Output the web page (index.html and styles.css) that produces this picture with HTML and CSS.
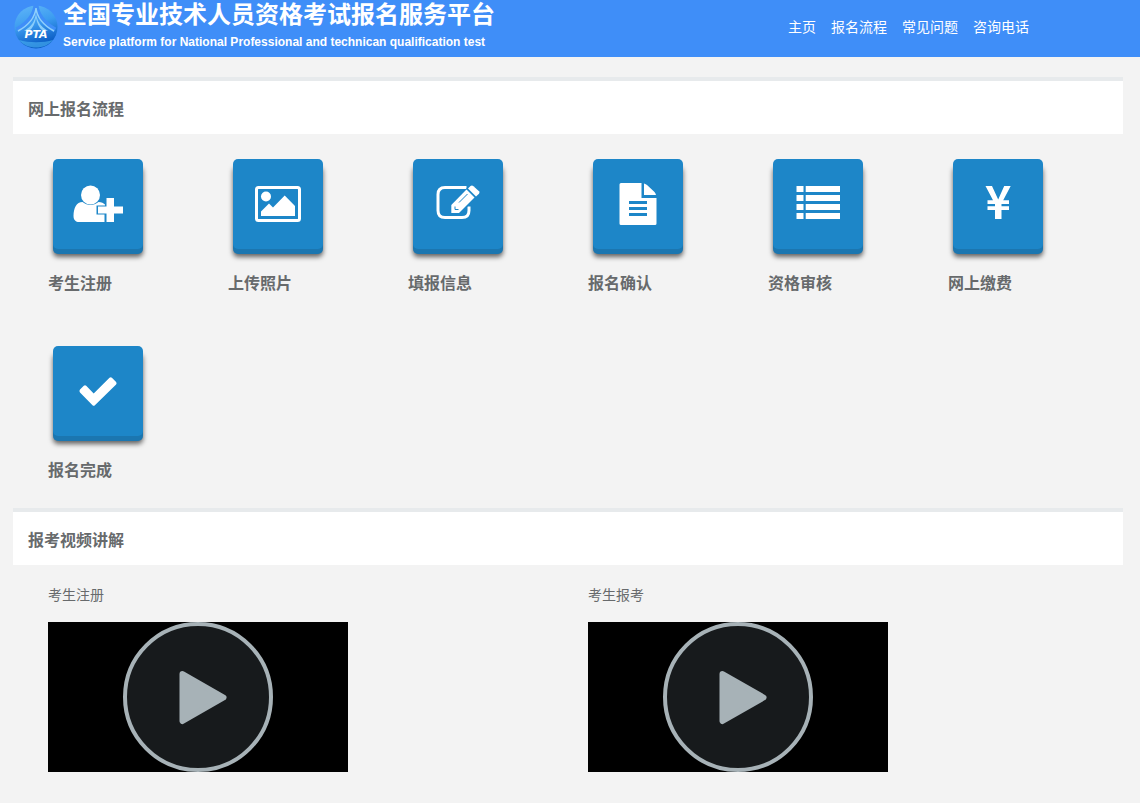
FILE: index.html
```html
<!DOCTYPE html>
<html lang="zh-CN">
<head>
<meta charset="utf-8">
<title>全国专业技术人员资格考试报名服务平台</title>
<link rel="stylesheet" href="styles.css">
</head>
<body>
<header class="header">
  <div class="brand">
    <svg class="logo" viewBox="0 0 44 44" aria-hidden="true">
      <defs>
        <linearGradient id="globe" x1="0" y1="0" x2="0.3" y2="1">
          <stop offset="0" stop-color="#62b8f8"/><stop offset="0.5" stop-color="#3c9cf0"/><stop offset="1" stop-color="#0a5cc4"/>
        </linearGradient>
      </defs>
      <circle cx="22" cy="22" r="21.5" fill="url(#globe)"/>
      <path d="M22 0c-1 10-7 18-19 25M22 0c1 10 7 18 19 25" fill="none" stroke="#3f8ef8" stroke-width="5"/>
      <path d="M22 3c-1 10-7 17-18 23M22 3c1 10 7 17 18 23" fill="none" stroke="#8fd0fb" stroke-width="1.5"/>
      <path d="M22 8c-1 8-4 13-12 18h5c4-3 6-8 7-13 1 5 3 10 7 13h5C26 21 23 16 22 8z" fill="#8acdfa"/>
      <path d="M5 35c10 3 24 3 34 0-8 10-26 10-34 0z" fill="#4db4f4" opacity="0.6"/>
      <text class="logo-text" x="22" y="33" text-anchor="middle">PTA</text>
    </svg>
    <div>
      <h1 class="brand-title">全国专业技术人员资格考试报名服务平台</h1>
      <p class="brand-subtitle">Service platform for National Professional and technican qualification test</p>
    </div>
  </div>
  <nav class="nav">
    <a href="#home">主页</a>
    <a href="#flow">报名流程</a>
    <a href="#faq">常见问题</a>
    <a href="#contact">咨询电话</a>
  </nav>
</header>
<main class="main">
  <section id="flow">
    <h2 class="section-title">网上报名流程</h2>
    <div class="steps">
      <a class="step" href="#register">
        <svg class="tile" viewBox="0 0 90 90" aria-hidden="true">
          <path d="M20.500 57c0-8 3-14 9-14 5 4 11 4 16 0 3 0 5 1 7 3v17H26c-3 0-5.500-2-5.500-6z"/>
          <circle cx="37.500" cy="36" r="9.500"/>
          <path class="cut" d="M43.500 46.500H52V38h10v8.500h9v9h-9V64H51.500v-8.500h-8z"/>
          <path d="M53.500 39h7.500v8.500h9v7h-9V63h-7.500v-8.500H45v-7h8.500z"/>
        </svg>
        <span class="step-name">考生注册</span>
      </a>
      <a class="step" href="#photo">
        <svg class="tile" viewBox="0 0 90 90" aria-hidden="true">
          <rect class="line" x="23.500" y="28.500" width="43" height="33" rx="2"/>
          <circle cx="33" cy="37.500" r="5"/>
          <path d="M28 57v-4.500l8-8 4 4 11.700-12L62 47v10z"/>
        </svg>
        <span class="step-name">上传照片</span>
      </a>
      <a class="step" href="#fill">
        <svg class="tile" viewBox="0 0 90 90" aria-hidden="true">
          <path class="line" d="M53.500 28.500H32q-7 0-7 7v16q0 7 7 7h17q7 0 7-7v-4"/>
          <path class="cut" d="M37 45.500L58 25l10 8-20.500 22H37z"/>
          <path d="M38.300 46l15.200-15.500 8 8L46 54h-7.700z"/>
          <path d="M55 29.500l2.500-2.500q1.500-1 3 .2l5.500 5q1 1.300 0 2.600L63 37.500z"/>
          <path class="pencil-mark" d="M46 43.500l8.500-8.500M42 47.500v3h3.500"/>
        </svg>
        <span class="step-name">填报信息</span>
      </a>
      <a class="step" href="#confirm">
        <svg class="tile" viewBox="0 0 90 90" aria-hidden="true">
          <path d="M28 24h20.500v15h15v25.500q0 1.500-1.500 1.500H28q-1.500 0-1.500-1.500v-39Q26.500 24 28 24z"/>
          <path d="M51 24.500q2 .5 3 1.500l7.500 7q1.200 1.500 1.500 3H51z"/>
          <path class="cut" d="M36 42h18v3H36zM36 48h18v3H36zM36 54h18v3H36z"/>
        </svg>
        <span class="step-name">报名确认</span>
      </a>
      <a class="step" href="#review">
        <svg class="tile" viewBox="0 0 90 90" aria-hidden="true">
          <path d="M23.500 27h7v6h-7zM23.500 36h7v6h-7zM23.500 45h7v6h-7zM23.500 54h7v6h-7zM32.700 27H67v6H32.700zM32.700 36H67v6H32.700zM32.700 45H67v6H32.700zM32.700 54H67v6H32.700z"/>
        </svg>
        <span class="step-name">资格审核</span>
      </a>
      <a class="step" href="#pay">
        <svg class="tile" viewBox="0 0 90 90" aria-hidden="true">
          <path d="M32.500 27H39l6.200 13.500L51.200 27h6.500l-7.500 14.300H56V45h-7.500v2.300H56V51h-7.500v9H42v-9h-7.500v-3.700H42V45h-7.500v-3.700h5.500z"/>
        </svg>
        <span class="step-name">网上缴费</span>
      </a>
      <a class="step" href="#done">
        <svg class="tile" viewBox="0 0 90 90" aria-hidden="true">
          <path d="M27 43.500l3.800-3.700q1.200-1 2.400 0l7.500 7.700L56.500 31.800q1.200-1 2.400 0l4.200 4.200q1 1.300 0 2.500L41.900 59.300q-1.200 1-2.400 0L27 46.500q-1.200-1.500 0-3z"/>
        </svg>
        <span class="step-name">报名完成</span>
      </a>
    </div>
  </section>
  <section>
    <h2 class="section-title">报考视频讲解</h2>
    <div class="videos">
      <div class="video">
        <h3 class="video-name">考生注册</h3>
        <button class="player" type="button" aria-label="播放 考生注册">
          <svg class="play" viewBox="0 0 150 150" aria-hidden="true">
            <circle cx="75" cy="75" r="73"/>
            <path d="M59.500 52l41 23.500-41 23.500z"/>
          </svg>
        </button>
      </div>
      <div class="video">
        <h3 class="video-name">考生报考</h3>
        <button class="player" type="button" aria-label="播放 考生报考">
          <svg class="play" viewBox="0 0 150 150" aria-hidden="true">
            <circle cx="75" cy="75" r="73"/>
            <path d="M59.500 52l41 23.500-41 23.500z"/>
          </svg>
        </button>
      </div>
    </div>
  </section>
</main>
</body>
</html>
```

FILE: styles.css
```css
* {
  box-sizing: border-box;
}

body {
  margin: 0;
  background: #f3f3f3;
  color: #676a6c;
  font-family: "Liberation Sans", "Noto Sans CJK SC", sans-serif;
  font-size: 14px;
}

h1, h2, h3, p {
  margin: 0;
}

a {
  color: inherit;
  text-decoration: none;
}

.header {
  display: flex;
  justify-content: space-between;
  padding: 0 111px 0 14px;
  background: #3f8ef8;
  color: #fff;
}

.brand {
  display: flex;
  gap: 5px;
  padding-bottom: 6px;
}

.logo {
  width: 44px;
  height: 44px;
  margin-top: 5px;
}

.logo-text {
  fill: #fff;
  font-family: "DejaVu Sans", sans-serif;
  font-size: 11px;
  font-style: italic;
  font-weight: bold;
}

.brand-title {
  font-size: 24px;
  line-height: 30px;
}

.brand-subtitle {
  padding-top: 4px;
  font-size: 12px;
  font-weight: bold;
  line-height: 17px;
}

.nav {
  display: flex;
  align-items: center;
  gap: 15px;
  padding-bottom: 5px;
}

.main {
  padding: 20px 17px 30px 13px;
}

.section-title {
  padding: 17px 15px 12px;
  border-top: 4px solid #e7eaec;
  background: #fff;
  font-size: 16px;
  line-height: 24px;
}

.steps {
  display: grid;
  grid-template-columns: repeat(6, 1fr);
  row-gap: 50px;
  padding: 25px 10px 25px 20px;
}

.step {
  display: flex;
  flex-direction: column;
  align-items: flex-start;
  gap: 23px;
  padding-left: 15px;
}

.tile {
  width: 90px;
  height: 90px;
  margin-left: 5px;
  border-radius: 5px;
  background: #1d86c8;
  box-shadow: 0 5px 0 #1b76b0, 0 8px 5px rgba(0, 0, 0, 0.6);
  fill: #fff;
}

.tile .cut {
  fill: #1d86c8;
}

.tile .line {
  fill: none;
  stroke: #fff;
  stroke-width: 3px;
}

.tile .pencil-mark {
  fill: none;
  stroke: #1d86c8;
  stroke-width: 1px;
}

.step-name {
  font-size: 16px;
  font-weight: bold;
  line-height: 24px;
}

.videos {
  display: grid;
  grid-template-columns: repeat(2, 1fr);
  padding: 20px 10px 0 20px;
}

.video {
  padding-left: 15px;
}

.video-name {
  padding-bottom: 17px;
  font-size: 14px;
  font-weight: normal;
  line-height: 20px;
}

.player {
  display: flex;
  justify-content: center;
  width: 300px;
  padding: 0;
  border: 0;
  background: #000;
  cursor: pointer;
}

.play {
  width: 150px;
  height: 150px;
}

.play circle {
  fill: #171a1c;
  stroke: #a7b2b7;
  stroke-width: 4px;
}

.play path {
  fill: #a7b2b7;
  stroke: #a7b2b7;
  stroke-width: 6px;
  stroke-linejoin: round;
}
```
